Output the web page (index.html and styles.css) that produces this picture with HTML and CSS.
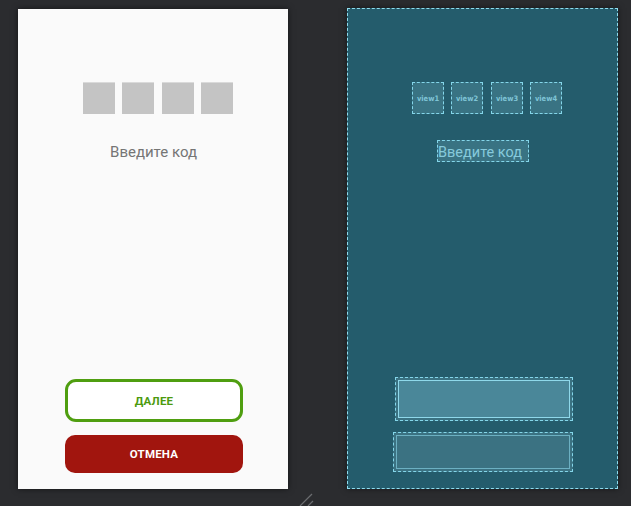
FILE: index.html
```html
<!DOCTYPE html>
<html lang="ru">
<head>
<meta charset="utf-8">
<title>Layout editor</title>
<link rel="stylesheet" href="styles.css">
</head>
<body>
<div class="canvas">
  <div class="phone">
    <div class="code-row">
      <div class="cell"></div>
      <div class="cell gap7"></div>
      <div class="cell gap8"></div>
      <div class="cell gap7"></div>
    </div>
    <div class="hint">Введите код</div>
    <div class="spacer"></div>
    <div class="btn btn-next">ДАЛЕЕ</div>
    <div class="btn btn-cancel">ОТМЕНА</div>
  </div>

  <div class="blueprint">
    <div class="bp-row">
      <div class="bp-cell">view1</div>
      <div class="bp-cell gap7">view2</div>
      <div class="bp-cell gap8">view3</div>
      <div class="bp-cell gap7">view4</div>
    </div>
    <div class="bp-hint">Введите код</div>
    <div class="spacer"></div>
    <div class="bp-btn bp-next"><div class="bp-inner"></div></div>
    <div class="bp-btn bp-cancel"><div class="bp-inner"></div></div>
  </div>
</div>
<svg class="resize" width="16" height="14" viewBox="0 0 16 14">
  <path d="M1 14 L13 2" stroke="#6b6d70" stroke-width="1.2" fill="none"/>
  <path d="M9 14 L14 9" stroke="#6b6d70" stroke-width="1.2" fill="none"/>
</svg>
</body>
</html>
```
FILE: styles.css
```css
html, body {
  margin: 0;
  padding: 0;
}
body {
  width: 631px;
  height: 506px;
  overflow: hidden;
  background: #2b2c2f;
  font-family: Roboto, "Noto Sans", sans-serif;
  position: relative;
}
.canvas {
  display: flex;
  align-items: flex-start;
  padding-left: 18px;
}
.phone {
  margin-top: 9px;
  width: 270px;
  height: 480px;
  background: #fafafa;
  box-shadow: 0 0 6px rgba(0,0,0,0.55);
  display: flex;
  flex-direction: column;
  box-sizing: border-box;
  padding-top: 73px;
  padding-bottom: 16px;
}
.code-row {
  display: flex;
  margin-left: 65px;
}
.cell {
  width: 32px;
  height: 32px;
  background: #c4c4c4;
  border-top: 1px solid #dadada;
  box-sizing: border-box;
}
.gap7 { margin-left: 7px; }
.gap8 { margin-left: 8px; }
.hint {
  margin-top: 28px;
  text-align: center;
  font-size: 15px;
  line-height: 20px;
  color: #757575;
  padding-left: 1px;
}
.spacer { flex: 1; }
.btn {
  margin-left: 47px;
  width: 178px;
  box-sizing: border-box;
  display: flex;
  align-items: center;
  justify-content: center;
  font-weight: bold;
  font-size: 11.5px;
  letter-spacing: 0.2px;
}
.btn-next {
  height: 43px;
  border: 3px solid #4f9e10;
  border-radius: 11px;
  background: #ffffff;
  color: #4c9a0e;
}
.btn-cancel {
  margin-top: 13px;
  height: 38px;
  border-radius: 10px;
  background: #a1150e;
  color: #ffffff;
}

.blueprint {
  margin-left: 59px;
  margin-top: 8px;
  width: 271px;
  height: 481px;
  box-sizing: border-box;
  background: #245c6c;
  border: 1px dashed #8fdcee;
  box-shadow: 0 0 6px rgba(0,0,0,0.5);
  display: flex;
  flex-direction: column;
  padding-top: 73px;
  padding-bottom: 16px;
}
.bp-row {
  display: flex;
  margin-left: 64px;
}
.bp-cell {
  width: 32px;
  height: 32px;
  box-sizing: border-box;
  background: #397383;
  border: 1px dashed #84d6ea;
  display: flex;
  align-items: center;
  justify-content: center;
  font-family: "DejaVu Sans Condensed", "DejaVu Sans", sans-serif;
  font-size: 7.5px;
  font-weight: bold;
  color: #7fc4d6;
}
.bp-hint {
  margin-top: 26px;
  margin-left: 89px;
  width: 92px;
  height: 22px;
  box-sizing: border-box;
  background: #397383;
  border: 1px dashed #84d6ea;
  font-size: 14.5px;
  line-height: 24px;
  color: #86cadc;
  white-space: nowrap;
  overflow: hidden;
}
.bp-btn {
  box-sizing: border-box;
  border: 1px dashed #84d6ea;
  padding: 2px;
}
.bp-inner {
  height: 100%;
  box-sizing: border-box;
  border: 1px solid #6fb3c5;
}
.bp-next {
  margin-left: 47px;
  width: 178px;
  height: 44px;
  background: #3a7282;
}
.bp-next .bp-inner {
  background: #4a8799;
  border: 1px solid #8fd8ea;
}
.bp-cancel {
  margin-top: 11px;
  margin-left: 45px;
  width: 180px;
  height: 40px;
  background: #3b7282;
}
.bp-cancel .bp-inner {
  border-color: #6cb0c2;
}
.resize {
  position: absolute;
  left: 299px;
  top: 492px;
}
```
